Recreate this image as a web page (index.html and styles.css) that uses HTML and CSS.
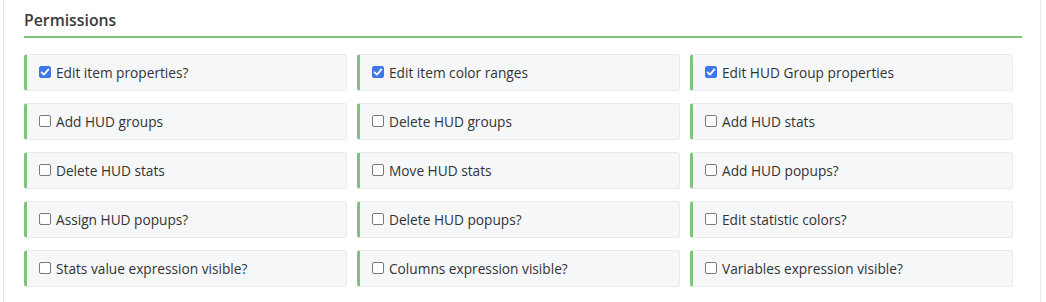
FILE: index.html
```html
<!DOCTYPE html>
<html>
<head>
<meta charset="utf-8">
<link rel="stylesheet" href="styles.css">
</head>
<body>
<div class="panel">
  <h3 class="title">Permissions</h3>
  <div class="grid">
    <label class="perm"><input type="checkbox" class="cb" checked><span>Edit item properties?</span></label>
    <label class="perm"><input type="checkbox" class="cb" checked><span>Edit item color ranges</span></label>
    <label class="perm"><input type="checkbox" class="cb" checked><span>Edit HUD Group properties</span></label>
    <label class="perm"><input type="checkbox" class="cb"><span>Add HUD groups</span></label>
    <label class="perm"><input type="checkbox" class="cb"><span>Delete HUD groups</span></label>
    <label class="perm"><input type="checkbox" class="cb"><span>Add HUD stats</span></label>
    <label class="perm"><input type="checkbox" class="cb"><span>Delete HUD stats</span></label>
    <label class="perm"><input type="checkbox" class="cb"><span>Move HUD stats</span></label>
    <label class="perm"><input type="checkbox" class="cb"><span>Add HUD popups?</span></label>
    <label class="perm"><input type="checkbox" class="cb"><span>Assign HUD popups?</span></label>
    <label class="perm"><input type="checkbox" class="cb"><span>Delete HUD popups?</span></label>
    <label class="perm"><input type="checkbox" class="cb"><span>Edit statistic colors?</span></label>
    <label class="perm"><input type="checkbox" class="cb"><span>Stats value expression visible?</span></label>
    <label class="perm"><input type="checkbox" class="cb"><span>Columns expression visible?</span></label>
    <label class="perm"><input type="checkbox" class="cb"><span>Variables expression visible?</span></label>
  </div>
</div>
</body>
</html>
```

FILE: styles.css
```css
html, body {
  margin: 0;
  padding: 0;
  background: #ffffff;
}
body {
  font-family: "Open Sans", "Liberation Sans", sans-serif;
  color: #333333;
  height: 302px;
  overflow: hidden;
}
.panel {
  margin: -19px 0 0 3px;
  width: 1038px;
  height: 321px;
  border: 1px solid #ebebeb;
  border-bottom: none;
  box-sizing: border-box;
  padding: 28px 18px 0 20px;
  background: #ffffff;
}
.title {
  margin: 0;
  font-size: 15.8px;
  font-weight: 600;
  line-height: 20px;
  color: #3a3a3a;
  padding-bottom: 6px;
  border-bottom: 2px solid #7fc27c;
}
.grid {
  margin-top: 16px;
  width: 989px;
  display: grid;
  grid-template-columns: repeat(3, 1fr);
  column-gap: 10px;
  row-gap: 12px;
}
.perm {
  display: flex;
  align-items: center;
  gap: 5px;
  height: 37px;
  box-sizing: border-box;
  padding-left: 12px;
  background: #f6f7f9;
  border: 1px solid #e9eaec;
  border-left: 3px solid #7fc27c;
  border-radius: 3px;
  font-size: 13.7px;
  color: #333333;
}
.cb {
  appearance: none;
  -webkit-appearance: none;
  margin: 0;
  width: 12px;
  height: 12px;
  border: 1px solid #7a7a7a;
  border-radius: 2px;
  background: #ffffff;
  box-sizing: border-box;
  position: relative;
  top: -1px;
  flex: none;
}
.cb:checked {
  border-color: #3d78e8;
  background: #3d78e8 url("data:image/svg+xml;utf8,<svg xmlns='http://www.w3.org/2000/svg' viewBox='0 0 12 12'><path d='M2.6 6.3 L4.9 8.6 L9.4 3.4' fill='none' stroke='white' stroke-width='1.8' stroke-linecap='round' stroke-linejoin='round'/></svg>") center/12px 12px no-repeat;
}
```
